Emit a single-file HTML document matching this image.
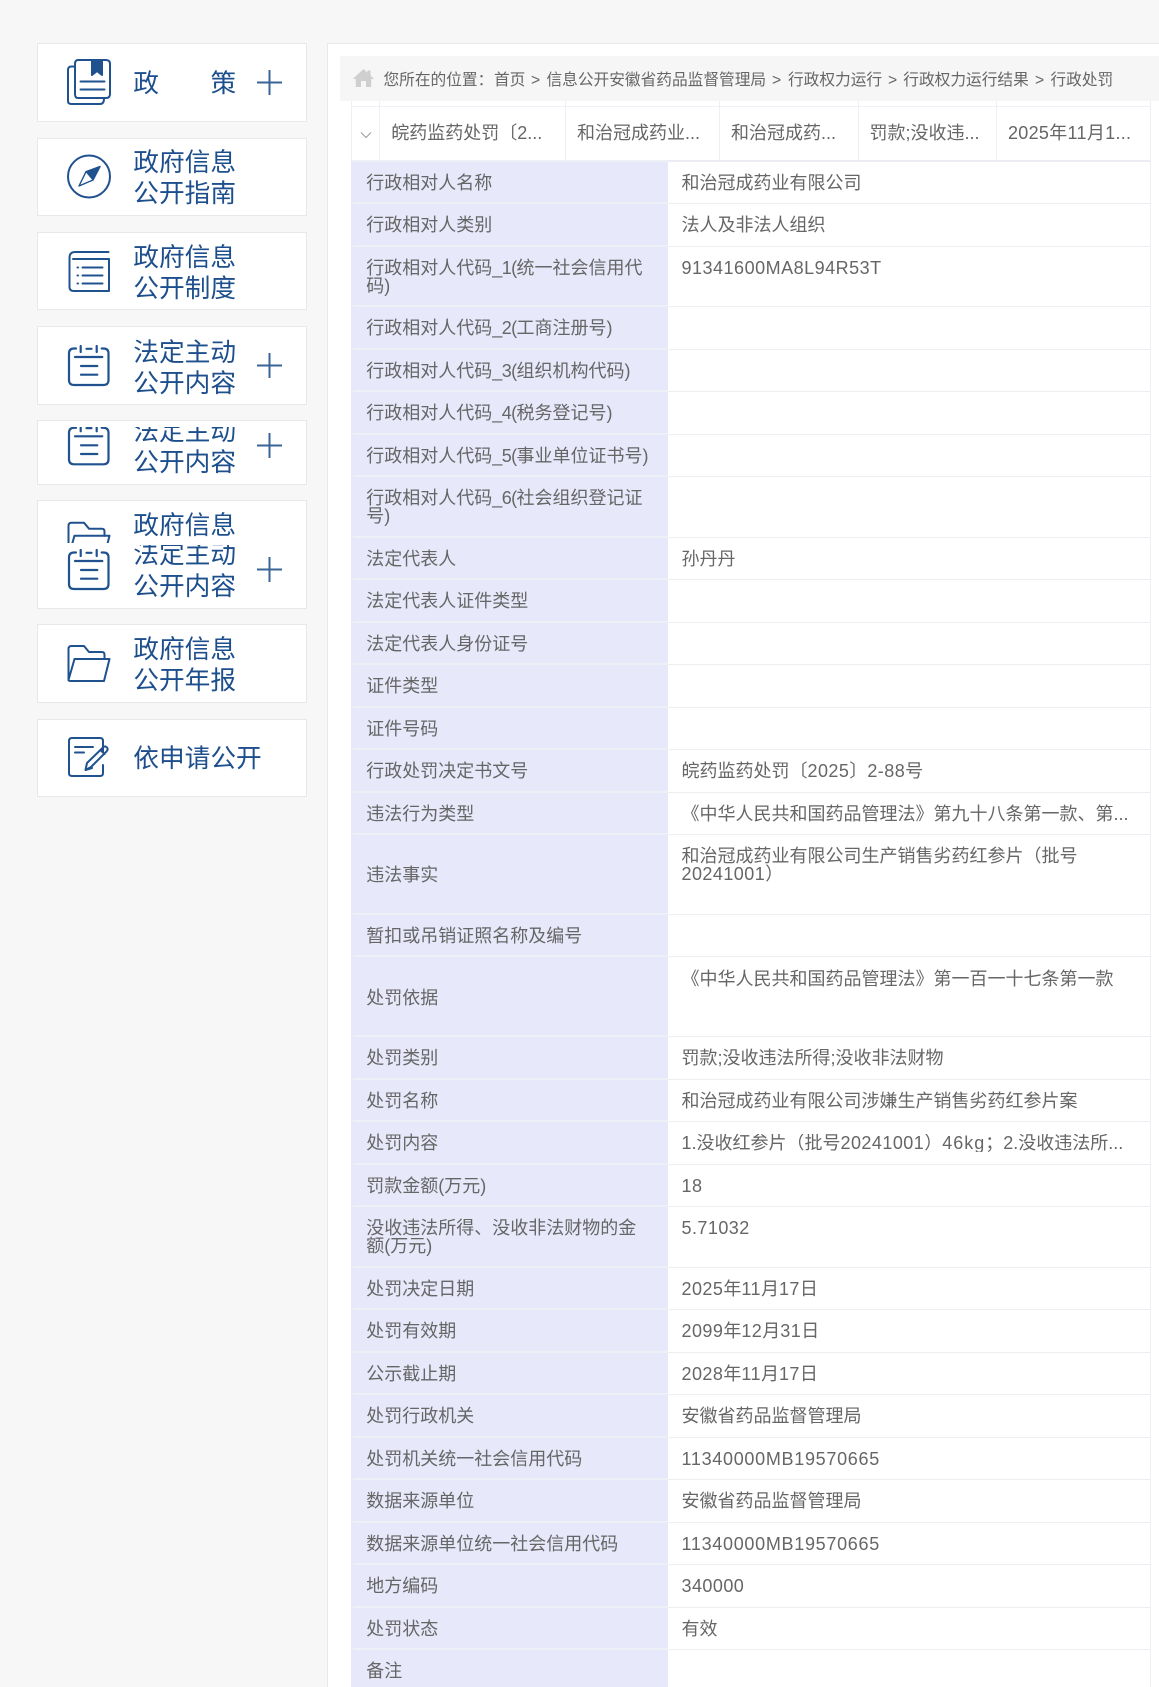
<!DOCTYPE html>
<html lang="zh-CN"><head><meta charset="utf-8"><title>行政处罚</title>
<style>
html,body{margin:0;padding:0;width:1159px;height:1687px;overflow:hidden;background:#f7f7f7}
body{position:relative;font-family:"Liberation Sans","Noto Sans CJK SC",sans-serif;color:#666}
div,svg,span{box-sizing:border-box}
.a{position:absolute}
.box{position:absolute;left:37px;width:270px;background:#fff;border:1px solid #e8e8e8}
.t{position:absolute;left:133.300px;font-size:25.7px;line-height:31px;color:#1d4f8d;white-space:nowrap}
.clip{position:absolute;overflow:hidden;left:0;width:1159px}
.ic{position:absolute;left:0;top:0;width:1159px;height:1687px;fill:none;stroke:#1f528f;stroke-width:2;stroke-linecap:round;stroke-linejoin:round;pointer-events:none}
.bc{position:absolute;top:71px;font-size:15.7px;line-height:20px;color:#666;white-space:nowrap}
.h{position:absolute;top:107px;height:53px;line-height:52px;font-size:18px;white-space:nowrap}
.r{position:absolute;left:351px;width:799px}
.l{position:absolute;left:2px;width:315px;top:-1px;bottom:0;border-top:2px solid #eff0f6;display:flex;align-items:center;padding-left:13.3px;font-size:18px;line-height:18px;white-space:nowrap}
.v{position:absolute;left:317px;right:0;top:0;bottom:0;border-top:1px solid #eeeef2;padding:12px 0 0 13.5px;font-size:18px;line-height:18px;white-space:nowrap}
.v span.c{display:block;height:18px;overflow:hidden}
.u{letter-spacing:-.6px}
.n{letter-spacing:.45px}
.i{letter-spacing:.5px}
.w{letter-spacing:.7px}
.k{letter-spacing:1px}
</style></head><body>

<!-- sidebar -->
<div class="box" style="top:43px;height:79px"></div>
<div class="box" style="top:138px;height:78px"></div>
<div class="box" style="top:232px;height:78px"></div>
<div class="box" style="top:326px;height:79px"></div>
<div class="box" style="top:420px;height:65px"></div>
<div class="box" style="top:500px;height:109px"></div>
<div class="box" style="top:624px;height:79px"></div>
<div class="box" style="top:719px;height:78px"></div>

<div class="t" style="top:69px">政</div><div class="t" style="top:69px;left:210.500px">策</div>
<div class="t" style="top:148px">政府信息<br>公开指南</div>
<div class="t" style="top:243px">政府信息<br>公开制度</div>
<div class="t" style="top:337.500px">法定主动<br>公开内容</div>
<div class="clip" style="top:427px;height:50px"><div class="t" style="top:-10px">法定主动<br>公开内容</div></div>
<div class="t" style="top:511px">政府信息</div>
<div class="clip" style="top:545px;height:23px"><div class="t" style="top:-4.750px">法定主动</div></div>
<div class="t" style="top:572px">公开内容</div>
<div class="t" style="top:635px">政府信息<br>公开年报</div>
<div class="t" style="top:744px">依申请公开</div>

<!-- plus signs -->
<svg class="ic" style="stroke:#3a6496;stroke-width:2;stroke-linecap:butt">
<path d="M257 82.500H282M269.500 70V95"/>
<path d="M257 365.500H282M269.500 353V378"/>
<path d="M257 445.500H282M269.500 433V458"/>
<path d="M257 569.500H282M269.500 557V582"/>
</svg>

<!-- icons -->
<svg class="ic">
<!-- book -->
<path d="M74.500 66.500H71.500Q68 66.500 68 70V101Q68 104 71.500 104H100Q104 104 104 98.500"/>
<path d="M78 60H106Q110 60 110 64V94Q110 98 106 98H78Q75 98 75 94V64Q75 60 78 60Z"/>
<path d="M92 60H102V75L97 71L92 75Z" fill="#1f528f"/>
<path d="M80.500 81.500H104.500M80.500 89.500H104.500"/>
<!-- compass -->
<circle cx="89" cy="176.500" r="21"/>
<path d="M100 166.500L93 180L79 186L86 171.700Z" stroke-width="1.400"/>
<path d="M100 166.500L93 180L86 171.700Z" fill="#1f528f" stroke-width="1"/>
<!-- list -->
<path d="M108.500 252H75Q69.500 252 69.500 258V287Q69.500 291 74 291H109V259H73"/>
<path d="M82.500 267.500H102.500M82.500 275.500H102.500M82.500 283.500H102.500"/>
<path d="M77.500 267.500H78M77.500 275.500H78M77.500 283.500H78"/>
</svg>
<!-- calendar box 4 -->
<svg class="ic" style="stroke-width:2.200">
<path d="M76 348.500H74Q69 348.500 69 353.500V380Q69 385 74 385H103.500Q108.500 385 108.500 380V353.500Q108.500 348.500 103.500 348.500H101.700"/>
<path d="M80.700 346V352M96.700 346V352M86.500 348.800H91.500"/>
<path d="M75 357H102.300M81 366H97.300M81 374.700H97.300"/>
</svg>
<!-- calendar box 5 (clipped) -->
<div class="clip" style="top:427px;height:50px"><svg class="ic" style="top:-427px;stroke-width:2.200">
<g transform="translate(0 79.300)">
<path d="M76 348.500H74Q69 348.500 69 353.500V380Q69 385 74 385H103.500Q108.500 385 108.500 380V353.500Q108.500 348.500 103.500 348.500H101.700"/>
<path d="M80.700 346V352M96.700 346V352M86.500 348.800H91.500"/>
<path d="M75 357H102.300M81 366H97.300M81 374.700H97.300"/>
</g></svg></div>
<!-- folder clipped, box 6 -->
<div class="clip" style="top:515px;height:28px"><svg class="ic" style="top:-515px">
<g transform="translate(0 -123.300)">
<path d="M68.500 680V649Q68.500 646 71.500 646H84L89 652H102Q104.500 652 104.500 655V659"/>
<path d="M68.500 680L74.500 659H109.500L104 681H71Q68.500 681 68.500 680Z"/>
</g></svg></div>
<!-- calendar box 6 clipped -->
<div class="clip" style="top:543px;height:50px"><svg class="ic" style="top:-543px;stroke-width:2.200">
<g transform="translate(0 204)">
<path d="M76 348.500H74Q69 348.500 69 353.500V380Q69 385 74 385H103.500Q108.500 385 108.500 380V353.500Q108.500 348.500 103.500 348.500H101.700"/>
<path d="M80.700 346V352M96.700 346V352M86.500 348.800H91.500"/>
<path d="M75 357H102.300M81 366H97.300M81 374.700H97.300"/>
</g></svg></div>
<svg class="ic">
<!-- folder box 7 -->
<path d="M68.500 680V649Q68.500 646 71.500 646H84L89 652H102Q104.500 652 104.500 655V659"/>
<path d="M68.500 680L74.500 659H109.500L104 681H71Q68.500 681 68.500 680Z"/>
<!-- edit -->
<path d="M103 752V741Q103 738 100 738H72Q69 738 69 741V773Q69 776 72 776H100Q103 776 103 773V765"/>
<path d="M75 747H93M75 752.500H84"/>
<path d="M85.500 770L87 763L103 747.500Q105 745.500 107 747.500Q108.500 749.500 106.500 751.500L91 767Z"/>
<path d="M100.500 750L104.500 754M85.500 770L92 768"/>
</svg>

<!-- main panel -->
<div class="a" style="left:327px;top:43px;width:832px;height:1644px;background:#fff;border-left:1px solid #e8e8e8;border-top:1px solid #e8e8e8"></div>

<!-- table background columns -->
<div class="a" style="left:351px;top:161px;width:317px;height:1526px;background:#e7e8fa"></div>
<div class="a" style="left:1150px;top:101px;width:1px;height:1586px;background:#eeeef5"></div>
<div class="a" style="left:351px;top:101px;width:1px;height:60px;background:#eeeef5"></div>

<!-- table head -->
<div class="a" style="left:351px;top:106px;width:799px;height:1px;background:#eff0f8"></div>
<div class="a" style="left:351px;top:160px;width:799px;height:2px;background:#ecedf4"></div>
<div class="a" style="left:379px;top:101px;width:1px;height:59px;background:#eeeff6"></div>
<div class="a" style="left:565px;top:101px;width:1px;height:59px;background:#eeeff6"></div>
<div class="a" style="left:719px;top:101px;width:1px;height:59px;background:#eeeff6"></div>
<div class="a" style="left:858px;top:101px;width:1px;height:59px;background:#eeeff6"></div>
<div class="a" style="left:996px;top:101px;width:1px;height:59px;background:#eeeff6"></div>
<svg class="a" style="left:360px;top:131px" width="12" height="8"><path d="M1 1.500L6 6.500L11 1.500" fill="none" stroke="#999" stroke-width="1"/></svg>
<div class="h" style="left:391.300px">皖药监药处罚〔2...</div>
<div class="h" style="left:577px">和治冠成药业...</div>
<div class="h" style="left:731px">和治冠成药...</div>
<div class="h" style="left:869.500px">罚款;没收违...</div>
<div class="h" style="left:1008px;letter-spacing:.3px">2025年11月1...</div>

<!-- rows -->
<div class="r" style="top:161px;height:42px"><div class="l">行政相对人名称</div><div class="v" style="border-top:0;padding-top:13px">和治冠成药业有限公司</div></div>
<div class="r" style="top:203px;height:43px"><div class="l">行政相对人类别</div><div class="v">法人及非法人组织</div></div>
<div class="r" style="top:246px;height:60px"><div class="l"><div>行政相对人代码<span class="u">_1(</span>统一社会信用代<br>码)</div></div><div class="v"><span class="i">91341600MA8L94R53T</span></div></div>
<div class="r" style="top:306px;height:43px"><div class="l">行政相对人代码<span class="u">_2(</span>工商注册号)</div><div class="v"></div></div>
<div class="r" style="top:349px;height:42px"><div class="l">行政相对人代码<span class="u">_3(</span>组织机构代码)</div><div class="v"></div></div>
<div class="r" style="top:391px;height:43px"><div class="l">行政相对人代码<span class="u">_4(</span>税务登记号)</div><div class="v"></div></div>
<div class="r" style="top:434px;height:42px"><div class="l">行政相对人代码<span class="u">_5(</span>事业单位证书号)</div><div class="v"></div></div>
<div class="r" style="top:476px;height:61px"><div class="l"><div>行政相对人代码<span class="u">_6(</span>社会组织登记证<br>号)</div></div><div class="v"></div></div>
<div class="r" style="top:537px;height:42px"><div class="l">法定代表人</div><div class="v">孙丹丹</div></div>
<div class="r" style="top:579px;height:43px"><div class="l">法定代表人证件类型</div><div class="v"></div></div>
<div class="r" style="top:622px;height:42px"><div class="l">法定代表人身份证号</div><div class="v"></div></div>
<div class="r" style="top:664px;height:43px"><div class="l">证件类型</div><div class="v"></div></div>
<div class="r" style="top:707px;height:42px"><div class="l">证件号码</div><div class="v"></div></div>
<div class="r" style="top:749px;height:43px"><div class="l">行政处罚决定书文号</div><div class="v">皖药监药处罚〔<span class="n">2025</span>〕<span class="n">2-88</span>号</div></div>
<div class="r" style="top:792px;height:42px"><div class="l">违法行为类型</div><div class="v">《中华人民共和国药品管理法》第九十八条第一款、第...</div></div>
<div class="r" style="top:834px;height:80px"><div class="l">违法事实</div><div class="v">和治冠成药业有限公司生产销售劣药红参片（批号<br><span class="n">20241001</span>）</div></div>
<div class="r" style="top:914px;height:42px"><div class="l">暂扣或吊销证照名称及编号</div><div class="v"></div></div>
<div class="r" style="top:956px;height:80px"><div class="l" style="padding-top:2px">处罚依据</div><div class="v" style="padding-top:13px">《中华人民共和国药品管理法》第一百一十七条第一款</div></div>
<div class="r" style="top:1036px;height:43px"><div class="l">处罚类别</div><div class="v">罚款;没收违法所得;没收非法财物</div></div>
<div class="r" style="top:1079px;height:42px"><div class="l">处罚名称</div><div class="v">和治冠成药业有限公司涉嫌生产销售劣药红参片案</div></div>
<div class="r" style="top:1121px;height:43px"><div class="l">处罚内容</div><div class="v"><span class="c">1.没收红参片（批号<span class="n">20241001</span>）<span class="k">46kg</span>；2.没收违法所...</span></div></div>
<div class="r" style="top:1164px;height:42px"><div class="l">罚款金额(万元)</div><div class="v"><span class="n">18</span></div></div>
<div class="r" style="top:1206px;height:61px"><div class="l"><div>没收违法所得、没收非法财物的金<br>额(万元)</div></div><div class="v"><span class="n">5.71032</span></div></div>
<div class="r" style="top:1267px;height:42px"><div class="l">处罚决定日期</div><div class="v"><span class="n">2025</span>年<span class="n">11</span>月<span class="n">17</span>日</div></div>
<div class="r" style="top:1309px;height:43px"><div class="l">处罚有效期</div><div class="v"><span class="n">2099</span>年<span class="n">12</span>月<span class="n">31</span>日</div></div>
<div class="r" style="top:1352px;height:42px"><div class="l">公示截止期</div><div class="v"><span class="n">2028</span>年<span class="n">11</span>月<span class="n">17</span>日</div></div>
<div class="r" style="top:1394px;height:43px"><div class="l">处罚行政机关</div><div class="v">安徽省药品监督管理局</div></div>
<div class="r" style="top:1437px;height:42px"><div class="l">处罚机关统一社会信用代码</div><div class="v"><span class="w">11340000MB19570665</span></div></div>
<div class="r" style="top:1479px;height:43px"><div class="l">数据来源单位</div><div class="v">安徽省药品监督管理局</div></div>
<div class="r" style="top:1522px;height:42px"><div class="l">数据来源单位统一社会信用代码</div><div class="v"><span class="w">11340000MB19570665</span></div></div>
<div class="r" style="top:1564px;height:43px"><div class="l">地方编码</div><div class="v"><span class="n">340000</span></div></div>
<div class="r" style="top:1607px;height:42px"><div class="l">处罚状态</div><div class="v">有效</div></div>
<div class="r" style="top:1649px;height:42px"><div class="l">备注</div><div class="v"></div></div>

<!-- breadcrumb -->
<div class="a" style="left:340px;top:56px;width:819px;height:45px;background:#f6f6f6"></div>
<svg class="a" style="left:352px;top:68px" width="23" height="20"><path d="M11.500 1L0.800 11H3.800V19H9V13H14V19H19.200V11H22.200L18.500 7.500V2.500H15.500V4.700Z" fill="#cfcfcf"/></svg>
<div class="bc" style="left:383.500px">您所在的位置：</div>
<div class="bc" style="left:494px">首页</div>
<div class="bc" style="left:531px">&gt;</div>
<div class="bc" style="left:546.500px">信息公开安徽省药品监督管理局</div>
<div class="bc" style="left:772px">&gt;</div>
<div class="bc" style="left:788px">行政权力运行</div>
<div class="bc" style="left:888px">&gt;</div>
<div class="bc" style="left:903.300px">行政权力运行结果</div>
<div class="bc" style="left:1035px">&gt;</div>
<div class="bc" style="left:1050.500px">行政处罚</div>

</body></html>
